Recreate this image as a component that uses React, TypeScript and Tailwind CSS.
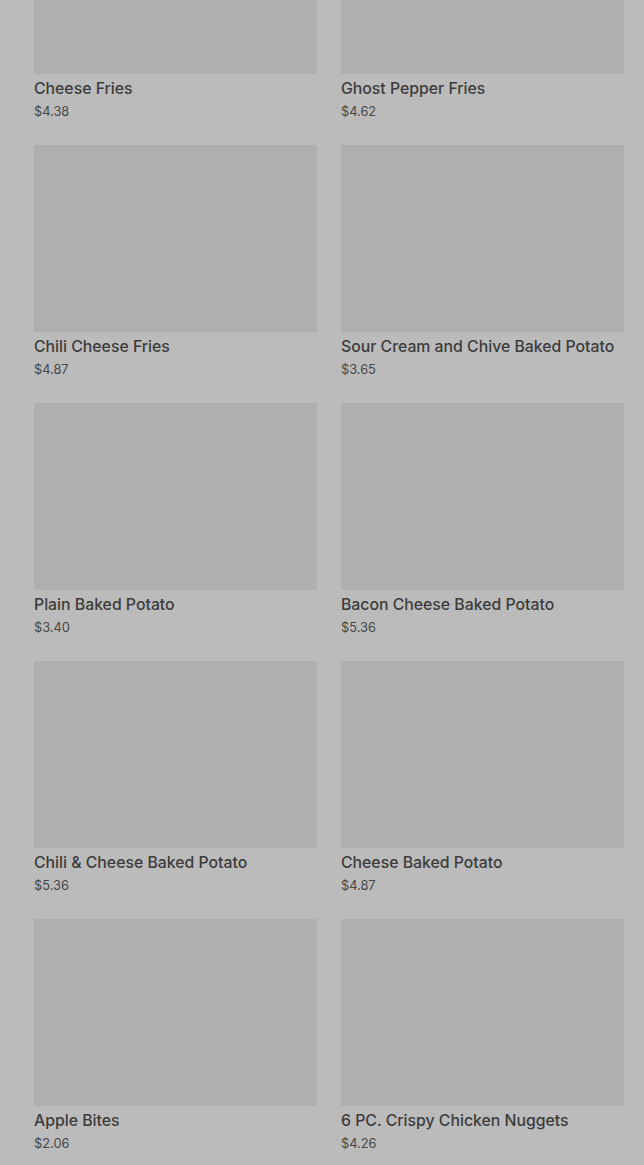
import React from "react";

const items: [string, string][] = [
  ["Cheese Fries", "$4.38"],
  ["Ghost Pepper Fries", "$4.62"],
  ["Chili Cheese Fries", "$4.87"],
  ["Sour Cream and Chive Baked Potato", "$3.65"],
  ["Plain Baked Potato", "$3.40"],
  ["Bacon Cheese Baked Potato", "$5.36"],
  ["Chili & Cheese Baked Potato", "$5.36"],
  ["Cheese Baked Potato", "$4.87"],
  ["Apple Bites", "$2.06"],
  ["6 PC. Crispy Chicken Nuggets", "$4.26"],
];

export default function App() {
  return (
    <div
      className="h-[1165px] w-[644px] overflow-hidden bg-[#bbbbbb]"
      style={{ fontFamily: "Inter, Roboto, 'Noto Sans', sans-serif" }}
    >
      <div className="-mt-[113px] grid grid-cols-2 gap-x-6 gap-y-[24px] pl-[34px] pr-5">
        {items.map(([name, price]) => (
          <div key={name} className="flex flex-col">
            <div className="h-[187px] w-full bg-[#afafaf]" />
            <div className="mt-[5px] whitespace-nowrap text-[15.8px] font-medium leading-[20px] text-[#3c3c3c]">
              {name}
            </div>
            <div className="mt-1 text-[12.8px] leading-[18px] text-[#474747]">{price}</div>
          </div>
        ))}
      </div>
    </div>
  );
}
